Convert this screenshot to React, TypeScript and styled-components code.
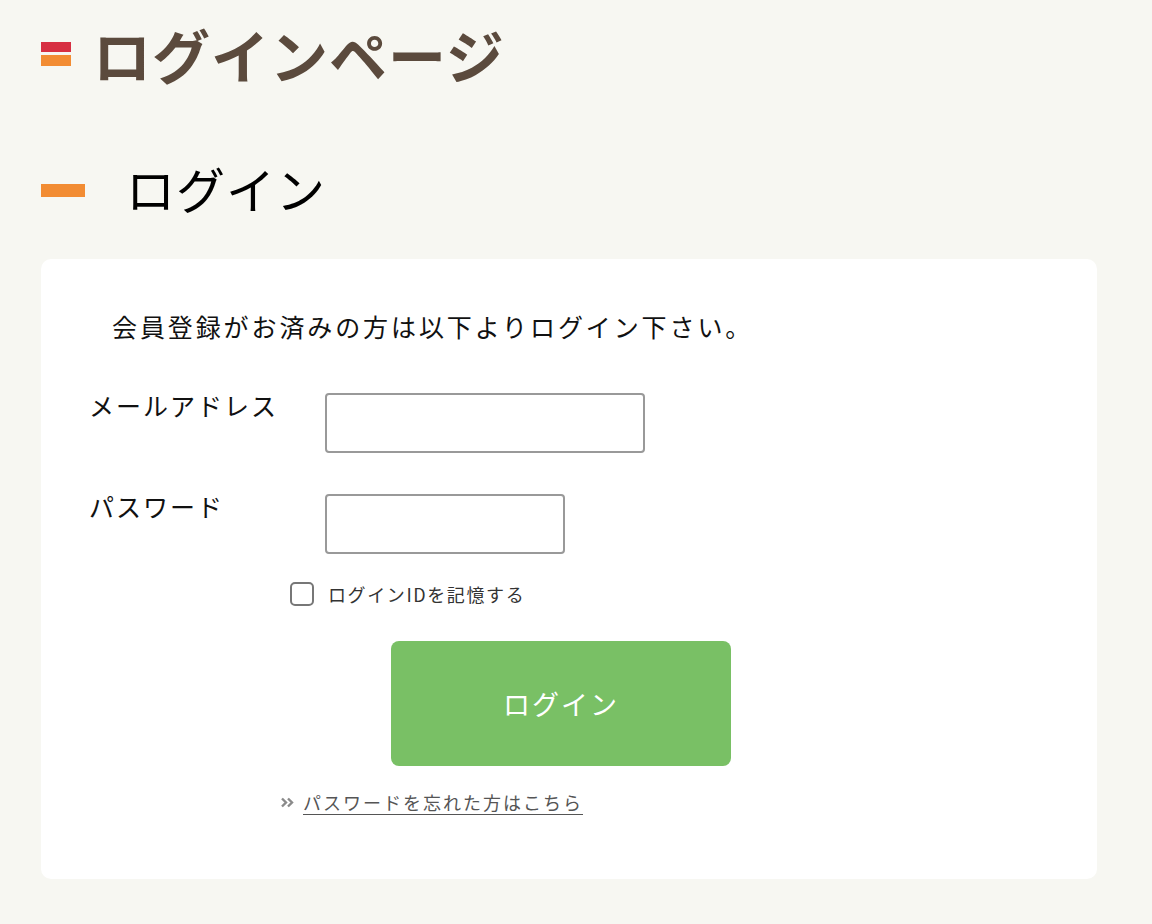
import React from "react";
import styled, { createGlobalStyle } from "styled-components";

const Global = createGlobalStyle`
  html, body { margin: 0; padding: 0; background: #f7f7f2; }
  body { font-family: "Noto Sans CJK JP", "Noto Sans", sans-serif; color: #111; }
  * { box-sizing: border-box; }
`;

const Page = styled.div`
  padding: 0 55px 44px 41px;
`;

const PageHeader = styled.div`
  display: flex;
  align-items: center;
  gap: 22px;
  padding-top: 25px;
`;

const FlagIcon = styled.span`
  display: flex;
  flex-direction: column;
  gap: 3px;
  width: 30px;
`;

const FlagBar = styled.span<{ $color: string; $h: number }>`
  display: block;
  height: ${(p) => p.$h}px;
  background: ${(p) => p.$color};
`;

const Title = styled.h1`
  margin: 0;
  font-size: 58px;
  line-height: 1;
  font-weight: 700;
  color: #5b4a3d;
  letter-spacing: 1px;
`;

const SectionHeader = styled.div`
  display: flex;
  align-items: center;
  gap: 41px;
  margin-top: 80px;
`;

const SectionBar = styled.span`
  display: block;
  width: 44px;
  height: 13px;
  background: #f28c33;
  margin-top: 5px;
`;

const SectionTitle = styled.h2`
  margin: 0;
  font-size: 49px;
  line-height: 1;
  font-weight: 400;
  color: #000;
  letter-spacing: 1px;
`;

const Card = styled.div`
  margin-top: 47px;
  background: #fff;
  border-radius: 10px;
  padding: 49px 48px 63px 48px;
`;

const Intro = styled.p`
  margin: 0;
  text-indent: 23px;
  font-size: 25px;
  line-height: 36px;
  letter-spacing: 2.9px;
  color: #111;
`;

const FormGrid = styled.div`
  display: grid;
  grid-template-columns: 236px auto;
  row-gap: 41px;
  margin-top: 49px;
  align-items: start;
`;

const Label = styled.label`
  font-size: 25px;
  line-height: 36px;
  letter-spacing: 2px;
  color: #111;
  margin-top: -6px;
`;

const TextInput = styled.input<{ $w: number }>`
  width: ${(p) => p.$w}px;
  height: 60px;
  border: 2px solid #999;
  border-radius: 4px;
  background: #fff;
  font-size: 20px;
  padding: 0 10px;
  outline: none;
`;

const RememberRow = styled.label`
  display: flex;
  align-items: center;
  gap: 14px;
  margin: 27px 0 0 201px;
  font-size: 18px;
  letter-spacing: 1.6px;
  color: #333;
`;

const CheckBox = styled.span`
  display: block;
  width: 24px;
  height: 24px;
  border: 2px solid #777;
  border-radius: 5px;
  background: #fff;
`;

const SubmitButton = styled.button`
  display: flex;
  align-items: center;
  justify-content: center;
  width: 340px;
  height: 125px;
  margin: 34px 0 0 302px;
  border: none;
  border-radius: 8px;
  background: #79c065;
  color: #fff;
  font-family: inherit;
  font-size: 27px;
  letter-spacing: 2px;
  cursor: pointer;
`;

const LinkRow = styled.div`
  display: flex;
  align-items: center;
  gap: 9px;
  margin: 22px 0 0 192px;
`;

const ForgotLink = styled.a`
  font-size: 18px;
  letter-spacing: 2px;
  color: #555;
  text-decoration: underline;
  text-underline-offset: 4px;
  line-height: 28px;
`;

const Chevrons = () => (
  <svg width="13" height="11" viewBox="0 0 13 11">
    <path d="M1 1.5 L5 5.5 L1 9.5" fill="none" stroke="#8a8a8a" strokeWidth="2.4" />
    <path d="M7 1.5 L11 5.5 L7 9.5" fill="none" stroke="#8a8a8a" strokeWidth="2.4" />
  </svg>
);

export default function App() {
  return (
    <Page>
      <Global />
      <PageHeader>
        <FlagIcon>
          <FlagBar $color="#d72f42" $h={10} />
          <FlagBar $color="#f28c33" $h={11} />
        </FlagIcon>
        <Title>ログインページ</Title>
      </PageHeader>

      <SectionHeader>
        <SectionBar />
        <SectionTitle>ログイン</SectionTitle>
      </SectionHeader>

      <Card>
        <Intro>会員登録がお済みの方は以下よりログイン下さい。</Intro>
        <FormGrid>
          <Label htmlFor="email">メールアドレス</Label>
          <TextInput id="email" type="text" $w={320} />
          <Label htmlFor="pw">パスワード</Label>
          <TextInput id="pw" type="password" $w={240} />
        </FormGrid>
        <RememberRow>
          <CheckBox />
          ログインIDを記憶する
        </RememberRow>
        <SubmitButton>ログイン</SubmitButton>
        <LinkRow>
          <Chevrons />
          <ForgotLink href="#">パスワードを忘れた方はこちら</ForgotLink>
        </LinkRow>
      </Card>
    </Page>
  );
}
